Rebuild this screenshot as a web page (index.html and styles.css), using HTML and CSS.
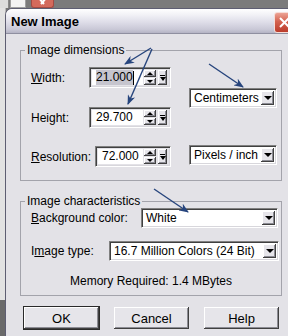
FILE: index.html
```html
<!DOCTYPE html>
<html lang="en">
<head>
    <meta charset="UTF-8">
    <title>New Image</title>
    <link rel="stylesheet" href="styles.css">
</head>
<body>

    <div class="screen">
        <!--behind the dialog-->
        <div class="taskstrip">
            <span class="nook"></span>
            <span class="mini-box"></span>
            <span class="mini-close">
                <svg width="23" height="8" viewBox="0 0 23 8"><path d="M7,-3 L13,4 M16,-3 L10,4" stroke="#fff" stroke-width="2"/></svg>
            </span>
        </div>

        <div class="desk">
            <div class="edge"></div>

            <div class="dialog">
                <div class="titlebar">
                    <span class="title">New Image</span>
                    <span class="close">
                        <svg width="19" height="19" viewBox="0 0 19 19"><path d="M5,5 L14,14 M14,5 L5,14" stroke="#fff" stroke-width="2"/></svg>
                    </span>
                </div>

                <div class="content">
                    <!--dimensions-->
                    <fieldset class="group dims">
                        <legend>Image dimensions</legend>
                        <div class="dims-body">
                            <div class="fields">
                                <div class="row">
                                    <span class="lbl"><u>W</u>idth:</span>
                                    <div class="spin">
                                        <span class="val"><span class="sel">21.000</span><span class="caret"></span></span>
                                        <span class="btns">
                                            <span class="updown"><i class="sb sb-up"></i><i class="sb sb-dn"></i></span>
                                            <i class="sb sb-more"></i>
                                        </span>
                                    </div>
                                </div>
                                <div class="row row-h">
                                    <span class="lbl">Height:</span>
                                    <div class="spin">
                                        <span class="val">29.700</span>
                                        <span class="btns">
                                            <span class="updown"><i class="sb sb-up"></i><i class="sb sb-dn"></i></span>
                                            <i class="sb sb-more"></i>
                                        </span>
                                    </div>
                                </div>
                                <div class="row row-r">
                                    <span class="lbl lbl-wide"><u>R</u>esolution:</span>
                                    <div class="spin spin-narrow">
                                        <span class="val">72.000</span>
                                        <span class="btns">
                                            <span class="updown"><i class="sb sb-up"></i><i class="sb sb-dn"></i></span>
                                            <i class="sb sb-more"></i>
                                        </span>
                                    </div>
                                </div>
                            </div>
                            <div class="units">
                                <div class="combo"><span class="txt">Centimeters</span><span class="drop"></span></div>
                                <div class="combo"><span class="txt">Pixels / inch</span><span class="drop"></span></div>
                            </div>
                        </div>
                    </fieldset>

                    <!--characteristics-->
                    <fieldset class="group chars">
                        <legend>Image characteristics</legend>
                        <div class="chars-body">
                            <div class="crow">
                                <span class="lbl lbl-bg"><u>B</u>ackground color:</span>
                                <div class="combo combo-bg"><span class="txt">White</span><span class="drop"></span></div>
                            </div>
                            <div class="crow crow-type">
                                <span class="lbl lbl-type">I<u>m</u>age type:</span>
                                <div class="combo combo-type"><span class="txt">16.7 Million Colors (24 Bit)</span><span class="drop"></span></div>
                            </div>
                            <p class="memory">Memory Required: 1.4 MBytes</p>
                        </div>
                    </fieldset>

                    <div class="buttons">
                        <span class="btn btn-default">OK</span>
                        <span class="btn">Cancel</span>
                        <span class="btn">Help</span>
                    </div>
                </div>
            </div>
        </div>

        <!--arrows drawn on top-->
        <svg class="arrows" width="288" height="336" viewBox="0 0 288 336">
            <defs>
                <marker id="head" markerWidth="10" markerHeight="8" refX="9" refY="4" orient="auto" markerUnits="userSpaceOnUse">
                    <path d="M0,0 L10,4 L0,8 L3,4 z" fill="#27457d"/>
                </marker>
            </defs>
            <line x1="151" y1="48" x2="125" y2="64" marker-end="url(#head)"/>
            <line x1="152" y1="49" x2="128" y2="104" marker-end="url(#head)"/>
            <line x1="209" y1="64" x2="243" y2="87" marker-end="url(#head)"/>
            <line x1="154" y1="189" x2="188" y2="212" marker-end="url(#head)"/>
        </svg>
    </div>

</body>
</html>
```

FILE: styles.css
```css
*{margin:0;padding:0;box-sizing:border-box;}

body{
    width: 288px;
    height: 336px;
    overflow: hidden;
    background: #777;
    font-family: "Liberation Sans", Arial, sans-serif;
    font-size: 12px;
    color: #000;
}

.screen{
    position: relative;
    width: 288px;
    height: 336px;
    overflow: hidden;
}

/*strip above the dialog*/
.taskstrip{
    display: flex;
    height: 8px;
    background: #7b7b7b;
}
.taskstrip .nook{
    width: 9px;
    background: #dcdcdc;
    border-right: 1px solid #8a8a8a;
}
.mini-box{
    width: 16px;
    margin-left: 1px;
    background: #f3f3f3;
    border: 1px solid #a0a0a0;
    border-top: 0;
}
.mini-close{
    width: 23px;
    margin-left: 5px;
    background: #d46a5c;
    border: 1px solid #a54a42;
    border-top: 0;
    border-radius: 0 0 3px 3px;
    overflow: hidden;
}
.mini-close svg{display: block;margin-left: -1px;}

.desk{
    display: flex;
    height: 328px;
}
.edge{
    flex-shrink: 0;
    width: 6px;
    background: linear-gradient(to bottom, #e2e2e2 292px, #6a6a6a 292px);
    border-right: 1px solid #b8b8b8;
}

/*dialog*/
.dialog{
    flex-shrink: 0;
    width: 292px;
    margin-left: -1px;
    border: 1px solid #5e5e72;
    border-bottom: 0;
    border-radius: 7px 7px 0 0;
    background: #e3e2e7;
    overflow: hidden;
}
.titlebar{
    display: flex;
    justify-content: space-between;
    align-items: center;
    height: 25px;
    padding: 0 1px 0 5px;
    background: linear-gradient(to bottom, #ffffff 0%, #f1f1f6 25%, #dedde8 55%, #c9c8d6 85%, #b4b3c4 100%);
    border-bottom: 1px solid #8f8fa0;
}
.title{
    margin-top: 1px;
    font-size: 13px;
    font-weight: bold;
}
.close{
    align-self: flex-end;
    width: 21px;
    height: 21px;
    background: linear-gradient(to bottom, #eca395 0%, #d4624f 45%, #bb3c2b 100%);
    border: 1px solid #f6dcd6;
    border-radius: 3px;
}
.close svg{display: block;}

.content{
    padding: 9px 14px 0 14px;
}

/*group boxes*/
.group{
    border: 1px solid #a3a3ab;
    padding: 0 0 0 4px;
}
.group legend{
    padding: 0 2px;
    line-height: 14px;
}
.lbl{
    width: 58px;
    flex-shrink: 0;
}
.lbl-wide{width: 64px;}
.lbl-bg{width: 110px;}
.lbl-type{width: 78px;}

.dims-body{
    display: flex;
    padding: 10px 0 13px 6px;
}
.fields{
    display: flex;
    flex-direction: column;
    width: 158px;
}
.row{
    display: flex;
    align-items: center;
    height: 21px;
}
.row-h{margin-top: 19px;}
.row-r{margin-top: 18px;}

/*sunken fields*/
.spin, .combo{
    border-top: 1px solid #808080;
    border-left: 1px solid #808080;
    border-right: 1px solid #fff;
    border-bottom: 1px solid #fff;
    box-shadow: inset 1px 1px 0 #404040, inset -1px -1px 0 #d8d7dc;
}
.spin{
    display: flex;
    width: 82px;
    height: 21px;
}
.spin-narrow{width: 76px;}
.spin .val{
    flex: 1;
    display: flex;
    align-items: center;
    margin: 2px 0 2px 2px;
    padding-left: 4px;
    background: #fff;
    line-height: 15px;
}
.sel{background: #c6c5ce;}
.caret{
    width: 1px;
    height: 14px;
    background: #000;
}
.spin .btns{
    display: flex;
    gap: 2px;
    padding: 2px 3px 2px 1px;
}
.updown{
    display: flex;
    flex-direction: column;
    gap: 1px;
    width: 12px;
}

/*raised buttons*/
.sb, .drop, .btn{
    display: flex;
    justify-content: center;
    align-items: center;
    background: #e6e5ea;
    box-shadow: inset -1px -1px 0 #404040, inset 1px 1px 0 #fff, inset -2px -2px 0 #8c8c94;
}
.sb{flex: 1;}
.sb-more{width: 9px;flex: none;flex-direction: column;gap: 1px;}
.sb-up::after{
    content: "";
    border-left: 3px solid transparent;
    border-right: 3px solid transparent;
    border-bottom: 3px solid #000;
}
.sb-dn::after{
    content: "";
    border-left: 3px solid transparent;
    border-right: 3px solid transparent;
    border-top: 3px solid #000;
}
.sb-more::before{
    content: "";
    width: 5px;
    height: 1px;
    background: #000;
}
.sb-more::after{
    content: "";
    border-left: 3px solid transparent;
    border-right: 3px solid transparent;
    border-top: 4px solid #000;
}

.units{
    display: flex;
    flex-direction: column;
    gap: 37px;
    width: 88px;
    padding-top: 21px;
}
.combo{
    display: flex;
    align-items: center;
    height: 20px;
    background: #fff;
}
.combo .txt{
    flex: 1;
    padding-left: 4px;
    white-space: nowrap;
}
.drop{
    width: 13px;
    height: 14px;
    margin-right: 2px;
}
.drop::after{
    content: "";
    border-left: 4px solid transparent;
    border-right: 4px solid transparent;
    border-top: 4px solid #000;
}

.chars{margin-top: 13px;}
.chars-body{
    padding: 0 0 7px 6px;
}
.crow{
    display: flex;
    align-items: center;
    height: 20px;
}
.crow-type{margin-top: 13px;}
.combo-bg{width: 137px;}
.combo-type{width: 170px;}
.memory{
    margin: 13px 0 0 -10px;
    line-height: 14px;
    text-align: center;
}

.buttons{
    display: flex;
    gap: 15px;
    margin-top: 11px;
    padding-left: 4px;
}
.btn{
    width: 75px;
    height: 22px;
    font-size: 13px;
}
.btn-default{
    outline: 1px solid #2a2a2a;
}

/*blue arrows*/
.arrows{
    position: absolute;
    top: 0;
    left: 0;
    pointer-events: none;
}
.arrows line{
    stroke: #27457d;
    stroke-width: 1.4;
}
```
